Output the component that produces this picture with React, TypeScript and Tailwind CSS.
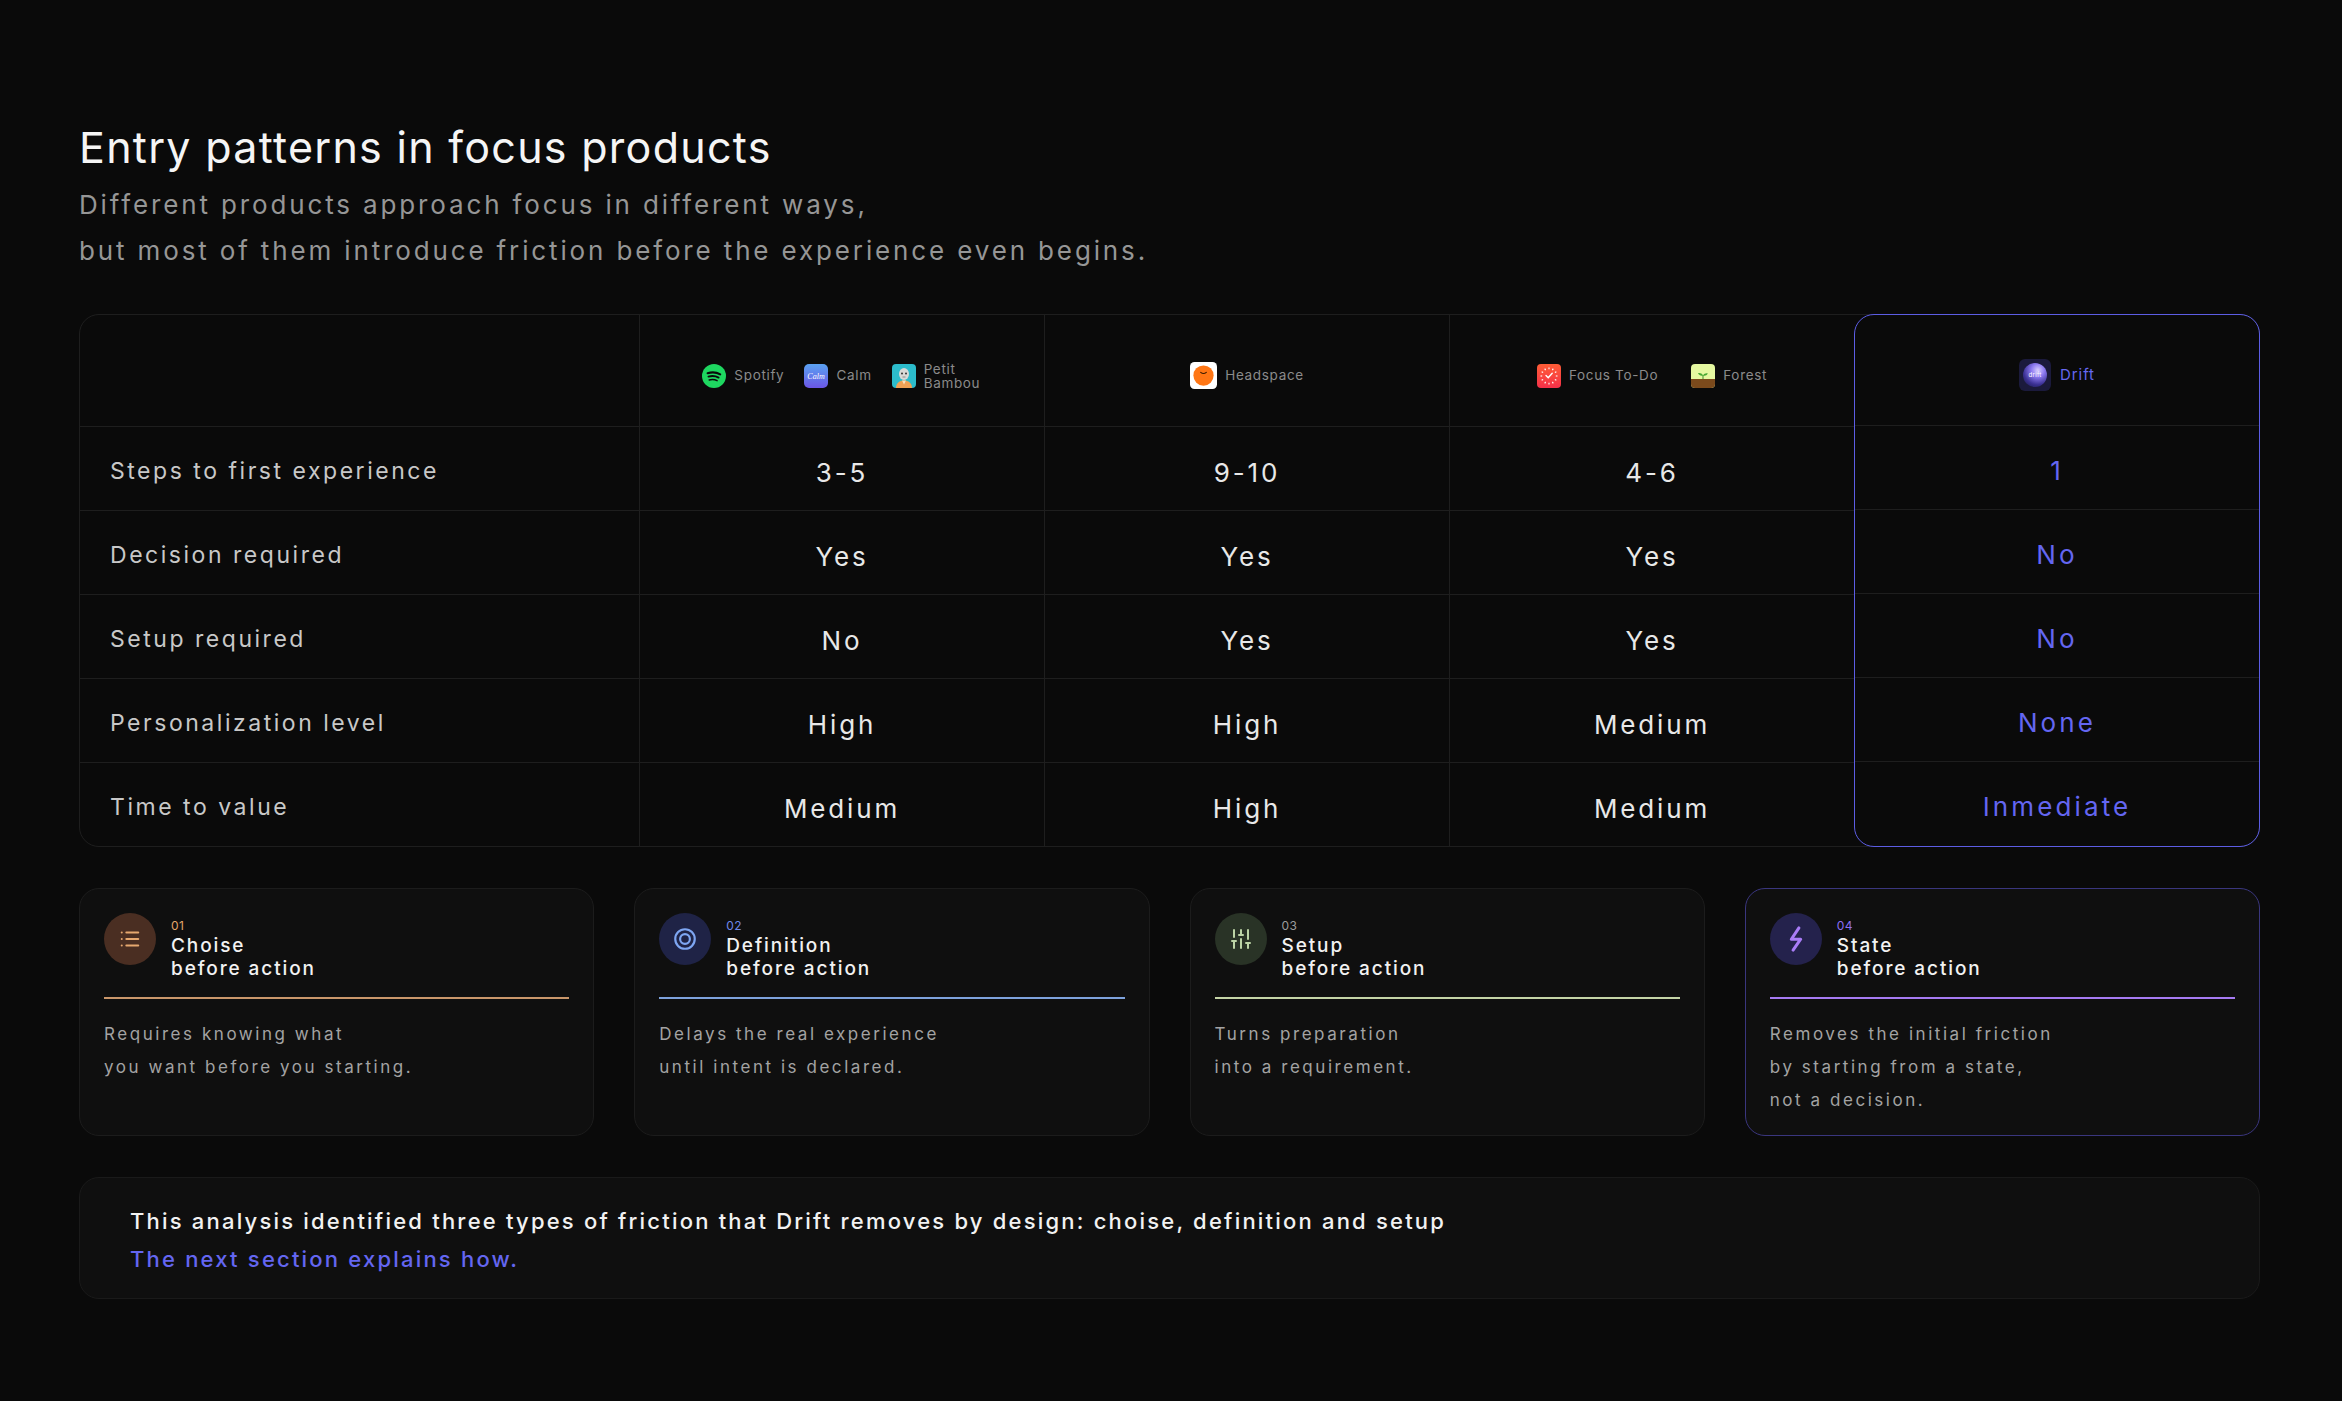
import React from "react";
import { List, SlidersVertical } from "lucide-react";

function SpotifyIcon() {
  return (
    <svg width="24" height="24" viewBox="0 0 24 24">
      <circle cx="12" cy="12" r="12" fill="#1ed760" />
      <path d="M5.6 9.2c4.2-1.3 8.9-1 12.6 1.1" stroke="#0a0a0a" strokeWidth="2.1" fill="none" strokeLinecap="round" />
      <path d="M6.4 12.6c3.5-1 7.2-.7 10.2 1" stroke="#0a0a0a" strokeWidth="1.8" fill="none" strokeLinecap="round" />
      <path d="M7.2 15.9c2.8-.7 5.6-.5 7.9.8" stroke="#0a0a0a" strokeWidth="1.5" fill="none" strokeLinecap="round" />
    </svg>
  );
}

function CalmIcon() {
  return (
    <svg width="24" height="24" viewBox="0 0 24 24">
      <defs>
        <linearGradient id="calmg" x1="0" y1="0" x2="0" y2="1">
          <stop offset="0" stopColor="#5aa2f2" />
          <stop offset="1" stopColor="#6b56e6" />
        </linearGradient>
      </defs>
      <rect width="24" height="24" rx="5" fill="url(#calmg)" />
      <text x="12" y="14.5" textAnchor="middle" fontSize="8" fontStyle="italic" fontFamily="Liberation Serif, serif" fill="#ffffff">Calm</text>
    </svg>
  );
}

function PetitBambouIcon() {
  return (
    <svg width="24" height="24" viewBox="0 0 24 24">
      <rect width="24" height="24" rx="4" fill="#2cbccb" />
      <path d="M4 24c0-5 3.5-7.5 8-7.5s8 2.5 8 7.5z" fill="#f0a154" />
      <path d="M10 16.5l2 4 2-4z" fill="#fbe2c0" />
      <ellipse cx="12" cy="10" rx="5" ry="6" fill="#d9d9d6" />
      <circle cx="10" cy="9.5" r="1" fill="#333" />
      <circle cx="14" cy="9.5" r="1" fill="#333" />
      <path d="M10.5 13h3" stroke="#777" strokeWidth="0.8" />
    </svg>
  );
}

function HeadspaceIcon() {
  return (
    <svg width="27" height="27" viewBox="0 0 24 24">
      <rect width="24" height="24" rx="4" fill="#ffffff" />
      <circle cx="12" cy="12" r="9" fill="#ff7614" />
      <path d="M9.5 9.2c1.5 1.2 3.5 1.2 5 0" stroke="#3a1a00" strokeWidth="1" fill="none" strokeLinecap="round" />
    </svg>
  );
}

function FocusTodoIcon() {
  const ticks = Array.from({ length: 12 }, (_, i) => i * 30);
  return (
    <svg width="24" height="24" viewBox="0 0 24 24">
      <defs>
        <linearGradient id="ftg" x1="0" y1="0" x2="0" y2="1">
          <stop offset="0" stopColor="#ff5d36" />
          <stop offset="1" stopColor="#f43049" />
        </linearGradient>
      </defs>
      <rect width="24" height="24" rx="4" fill="url(#ftg)" />
      {ticks.map((a) => (
        <line key={a} x1="12" y1="3.5" x2="12" y2="5.2" stroke="#ffffff" strokeWidth="1.1" transform={`rotate(${a} 12 12)`} />
      ))}
      <path d="M9 11.5l2.2 2.2 4-4.5" stroke="#ffffff" strokeWidth="1.4" fill="none" strokeLinecap="round" />
    </svg>
  );
}

function ForestIcon() {
  return (
    <svg width="24" height="24" viewBox="0 0 24 24">
      <clipPath id="forestclip">
        <rect width="24" height="24" rx="4" />
      </clipPath>
      <g clipPath="url(#forestclip)">
        <rect width="24" height="24" fill="#e5f8a0" />
        <rect y="15" width="24" height="9" fill="#7b4a1c" />
        <path d="M12 15v-4" stroke="#3f8f2a" strokeWidth="1" />
        <path d="M12 11.5c-1-2.2-3.5-2.8-5-2.2 1 2 3 2.8 5 2.2z" fill="#46a832" />
        <path d="M12 11.5c1-2 3.3-2.6 4.8-2 -1 1.9-2.9 2.6-4.8 2z" fill="#46a832" />
      </g>
    </svg>
  );
}

function DriftIcon() {
  return (
    <svg width="32" height="32" viewBox="0 0 32 32">
      <defs>
        <radialGradient id="driftg" cx="0.62" cy="0.3" r="0.8">
          <stop offset="0" stopColor="#d7ccff" />
          <stop offset="0.35" stopColor="#8b78f0" />
          <stop offset="0.75" stopColor="#3b3194" />
          <stop offset="1" stopColor="#231f5c" />
        </radialGradient>
      </defs>
      <rect width="32" height="32" rx="6" fill="#1b1a3c" />
      <circle cx="16" cy="16" r="12" fill="url(#driftg)" />
      <text x="16" y="18" textAnchor="middle" fontSize="6" fontFamily="Inter, sans-serif" fill="#ffffff" letterSpacing="0.3">drift</text>
    </svg>
  );
}

function TargetIcon() {
  return (
    <svg width="26" height="26" viewBox="0 0 24 24" fill="none" stroke="#7ea6f2" strokeWidth="2">
      <circle cx="12" cy="12" r="9" />
      <circle cx="12" cy="12" r="4.5" />
    </svg>
  );
}

function BoltIcon() {
  return (
    <svg width="28" height="28" viewBox="0 0 24 24" fill="none" stroke="#a97cf6" strokeWidth="2.6" strokeLinecap="round" strokeLinejoin="round">
      <path d="M14.5 2.5L8 12.2h8L9.5 21.5" />
    </svg>
  );
}

function Brand({ icon, label, two }: { icon: React.ReactNode; label: string; two?: boolean }) {
  return (
    <div className="flex items-center gap-[8px]">
      {icon}
      <span className={`text-[13.5px] tracking-[0.05em] text-[#8b8b8b] ${two ? "leading-[14px] w-[58px]" : "leading-none"}`}>
        {label}
      </span>
    </div>
  );
}

const rows = [
  "Steps to first experience",
  "Decision required",
  "Setup required",
  "Personalization level",
  "Time to value",
];

const cols: { header: React.ReactNode; values: string[] }[] = [
  {
    header: (
      <div className="flex items-center gap-[20px]">
        <Brand icon={<SpotifyIcon />} label="Spotify" />
        <Brand icon={<CalmIcon />} label="Calm" />
        <Brand icon={<PetitBambouIcon />} label="Petit Bambou" two />
      </div>
    ),
    values: ["3-5", "Yes", "No", "High", "Medium"],
  },
  {
    header: <Brand icon={<HeadspaceIcon />} label="Headspace" />,
    values: ["9-10", "Yes", "Yes", "High", "High"],
  },
  {
    header: (
      <div className="flex items-center gap-[33px]">
        <Brand icon={<FocusTodoIcon />} label="Focus To-Do" />
        <Brand icon={<ForestIcon />} label="Forest" />
      </div>
    ),
    values: ["4-6", "Yes", "Yes", "Medium", "Medium"],
  },
];

const driftValues = ["1", "No", "No", "None", "Inmediate"];

const cards = [
  {
    n: "01",
    title: "Choise",
    icon: <List size={22} color="#e6a86f" strokeWidth={2.2} />,
    circle: "bg-[#4a2e22]",
    num: "text-[#e2a56b]",
    line: "bg-[#c9966a]",
    border: "border-[#1c1c1c]",
    desc: ["Requires knowing what", "you want before you starting."],
  },
  {
    n: "02",
    title: "Definition",
    icon: <TargetIcon />,
    circle: "bg-[#1f2346]",
    num: "text-[#6f88ea]",
    line: "bg-[#7ea2dc]",
    border: "border-[#1c1c1c]",
    desc: ["Delays the real experience", "until intent is declared."],
  },
  {
    n: "03",
    title: "Setup",
    icon: <SlidersVertical size={24} color="#bcd4a6" strokeWidth={2} />,
    circle: "bg-[#293326]",
    num: "text-[#9c9c9c]",
    line: "bg-[#c4d4a6]",
    border: "border-[#1c1c1c]",
    desc: ["Turns preparation", "into a requirement."],
  },
  {
    n: "04",
    title: "State",
    icon: <BoltIcon />,
    circle: "bg-[#24224c]",
    num: "text-[#8c6ef3]",
    line: "bg-[#a67bf2]",
    border: "border-[#3a367e]",
    desc: ["Removes the initial friction", "by starting from a state,", "not a decision."],
  },
];

export default function App() {
  return (
    <div className="min-h-[1401px] w-full bg-[#0a0a0a] pl-[79px] pr-[82px] pt-[126px] font-[family-name:Inter,sans-serif] text-white">
      <h1 className="text-[43px] leading-[42px] font-normal tracking-[0.03em] text-[#f5f5f5]">
        Entry patterns in focus products
      </h1>
      <p className="mt-[14px] text-[26px] leading-[46px] tracking-[0.11em] text-[#969696]">
        Different products approach focus in different ways,
        <br />
        but most of them introduce friction before the experience even begins.
      </p>

      {/* Table */}
      <div className="mt-[40px] flex rounded-[20px] border border-[#1e1e1e]">
        <div className="w-[559px] shrink-0">
          <div className="h-[111px]" />
          {rows.map((r) => (
            <div key={r} className="flex h-[84px] items-center border-t border-[#1e1e1e] pl-[30px] pt-[6px] text-[23px] tracking-[0.11em] text-[#c8c8c8]">
              {r}
            </div>
          ))}
        </div>
        {cols.map((c, i) => (
          <div key={i} className="flex-1 border-l border-[#1e1e1e]">
            <div className="flex h-[111px] items-center justify-center pt-[10px]">{c.header}</div>
            {c.values.map((v, j) => (
              <div key={j} className="flex h-[84px] items-center justify-center border-t border-[#1e1e1e] pt-[8px] text-[26px] tracking-[0.11em] text-[#e8e8e8]">
                {v}
              </div>
            ))}
          </div>
        ))}
        <div className="-my-px -mr-px flex-1 rounded-[20px] border-[1.5px] border-[#5c5de4]">
          <div className="flex h-[110px] items-center justify-center pt-[10px]">
            <div className="flex items-center gap-[9px]">
              <DriftIcon />
              <span className="text-[15px] tracking-[0.06em] text-[#6668f0]">Drift</span>
            </div>
          </div>
          {driftValues.map((v, j) => (
            <div key={j} className="flex h-[84px] items-center justify-center border-t border-[#1e1e1e] pt-[6px] text-[26px] tracking-[0.12em] text-[#6466f1]">
              {v}
            </div>
          ))}
        </div>
      </div>

      {/* Cards */}
      <div className="mt-[41px] grid grid-cols-4 gap-[40px]">
        {cards.map((c) => (
          <div key={c.n} className={`rounded-[20px] border bg-[#0f0f0f] px-[24px] pt-[24px] pb-[18px] ${c.border}`}>
            <div className="flex items-start gap-[15px]">
              <div className={`flex h-[52px] w-[52px] shrink-0 items-center justify-center rounded-full ${c.circle}`}>
                {c.icon}
              </div>
              <div className="pt-[5px]">
                <div className={`text-[12px] leading-[16px] tracking-[0.04em] ${c.num}`}>{c.n}</div>
                <div className="text-[19px] leading-[23px] font-medium tracking-[0.1em] text-[#f2f2f2]">{c.title}</div>
                <div className="text-[19px] leading-[23px] font-medium tracking-[0.1em] text-[#f2f2f2]">before action</div>
              </div>
            </div>
            <div className={`mt-[17px] h-[1.5px] w-full ${c.line}`} />
            <div className="mt-[19px] text-[17px] leading-[33px] tracking-[0.15em] text-[#a3a3a3]">
              {c.desc.map((d) => (
                <div key={d}>{d}</div>
              ))}
            </div>
          </div>
        ))}
      </div>

      {/* Bottom panel */}
      <div className="mt-[41px] rounded-[20px] border border-[#1a1a1a] bg-[#0f0f0f] pl-[50px] pt-[24px] pb-[20px]">
        <div className="text-[22px] leading-[38px] font-medium tracking-[0.1em] text-[#f2f2f2]">
          This analysis identified three types of friction that Drift removes by design: choise, definition and setup
        </div>
        <div className="text-[22px] leading-[38px] font-medium tracking-[0.1em] text-[#6466f1]">
          The next section explains how.
        </div>
      </div>
    </div>
  );
}
